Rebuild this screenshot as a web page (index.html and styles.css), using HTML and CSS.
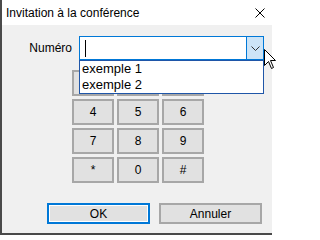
FILE: index.html
```html
<!DOCTYPE html>
<html lang="fr">
<head>
<meta charset="utf-8">
<title>Invitation à la conférence</title>
<link rel="stylesheet" href="styles.css">
</head>
<body>
<div class="window">
  <div class="titlebar">
    <span class="title">Invitation à la conférence</span>
    <span class="close">
      <svg width="10" height="10" viewBox="0 0 10 10"><path d="M0.5 0.5 L9.5 9.5 M9.5 0.5 L0.5 9.5" stroke="#000" stroke-width="1" fill="none"/></svg>
    </span>
  </div>
  <div class="content">
    <div class="form-row">
      <span class="label">Numéro</span>
      <div class="combo">
        <div class="combo-field"><span class="caret"></span></div>
        <div class="combo-btn">
          <svg width="9" height="5" viewBox="0 0 9 5"><path d="M0.5 0.5 L4.5 4.5 L8.5 0.5" stroke="#333" stroke-width="1" fill="none"/></svg>
        </div>
        <ul class="combo-list">
          <li>exemple 1</li>
          <li>exemple 2</li>
        </ul>
      </div>
    </div>
    <div class="keypad">
      <button class="key" aria-label="1"></button>
      <button class="key" aria-label="2"></button>
      <button class="key" aria-label="3"></button>
      <button class="key">4</button>
      <button class="key">5</button>
      <button class="key">6</button>
      <button class="key">7</button>
      <button class="key">8</button>
      <button class="key">9</button>
      <button class="key">*</button>
      <button class="key">0</button>
      <button class="key">#</button>
    </div>
    <div class="actions">
      <button class="btn btn-default">OK</button>
      <button class="btn">Annuler</button>
    </div>
  </div>
</div>
<svg class="cursor" width="12" height="20" viewBox="0 0 12 20"><path d="M0.5 0.5 L0.5 16.5 L4.5 12.5 L7.5 19.5 L9.5 18.5 L6.5 11.5 L11.5 11.5 Z" fill="#fff" stroke="#000" stroke-width="1" stroke-linejoin="miter"/></svg>
</body>
</html>
```
FILE: styles.css
```css
* { box-sizing: border-box; }
html, body {
  margin: 0;
  padding: 0;
  width: 272px;
  height: 236px;
  overflow: hidden;
  background: #ffffff;
  font-family: "Liberation Sans", Arial, sans-serif;
  font-size: 12px;
  color: #000;
}
.window {
  position: relative;
  width: 272px;
  height: 235px;
  background: #f0f0f0;
  border-left: 2px solid #4a4a4a;
  border-bottom: 2px solid #4a4a4a;
}
.titlebar {
  height: 25px;
  background: #ffffff;
  display: flex;
  align-items: center;
  justify-content: space-between;
  padding-left: 4px;
}
.title {
  font-size: 12px;
  line-height: 16px;
}
.close {
  width: 25px;
  height: 25px;
  display: flex;
  align-items: center;
  justify-content: center;
}
.close svg { display: block; }
.content {
  padding-top: 11px;
}
.form-row {
  display: flex;
  align-items: center;
}
.label {
  width: 70px;
  text-align: right;
  margin-right: 7px;
  font-size: 12px;
}
.combo {
  position: relative;
  width: 185px;
  height: 24px;
  border: 1px solid #0078d7;
  background: #fff;
  display: flex;
}
.combo-field {
  flex: 1;
  display: flex;
  align-items: center;
  padding-left: 5px;
}
.caret {
  display: block;
  width: 1px;
  height: 17px;
  background: #000;
}
.combo-btn {
  width: 17px;
  background: #cce4f7;
  border-left: 1px solid #0078d7;
  display: flex;
  align-items: center;
  justify-content: center;
}
.combo-btn svg { display: block; }
.combo-list {
  position: absolute;
  left: -1px;
  top: 23px;
  width: 185px;
  margin: 0;
  padding: 0;
  list-style: none;
  background: #fff;
  border: 1px solid #1f56a8;
  z-index: 2;
}
.combo-list li {
  height: 16px;
  line-height: 16px;
  padding-left: 2px;
  font-size: 13px;
}
.keypad {
  margin-top: 10px;
  margin-left: 70px;
  display: grid;
  grid-template-columns: repeat(3, 42px);
  grid-auto-rows: 26px;
  gap: 3px;
}
.key, .btn {
  font-family: inherit;
  font-size: 12px;
  color: #000;
  background: #e1e1e1;
  border: 2px solid #a7a7a7;
  margin: 0;
  padding: 0;
}
.actions {
  margin-top: 20px;
  margin-left: 45px;
  display: flex;
  gap: 9px;
}
.btn {
  width: 103px;
  height: 21px;
}
.btn-default {
  border: 2px solid #0078d7;
  box-shadow: inset 0 0 0 1px #ffffff;
}
.cursor {
  position: absolute;
  left: 264px;
  top: 49px;
  z-index: 5;
}
```
